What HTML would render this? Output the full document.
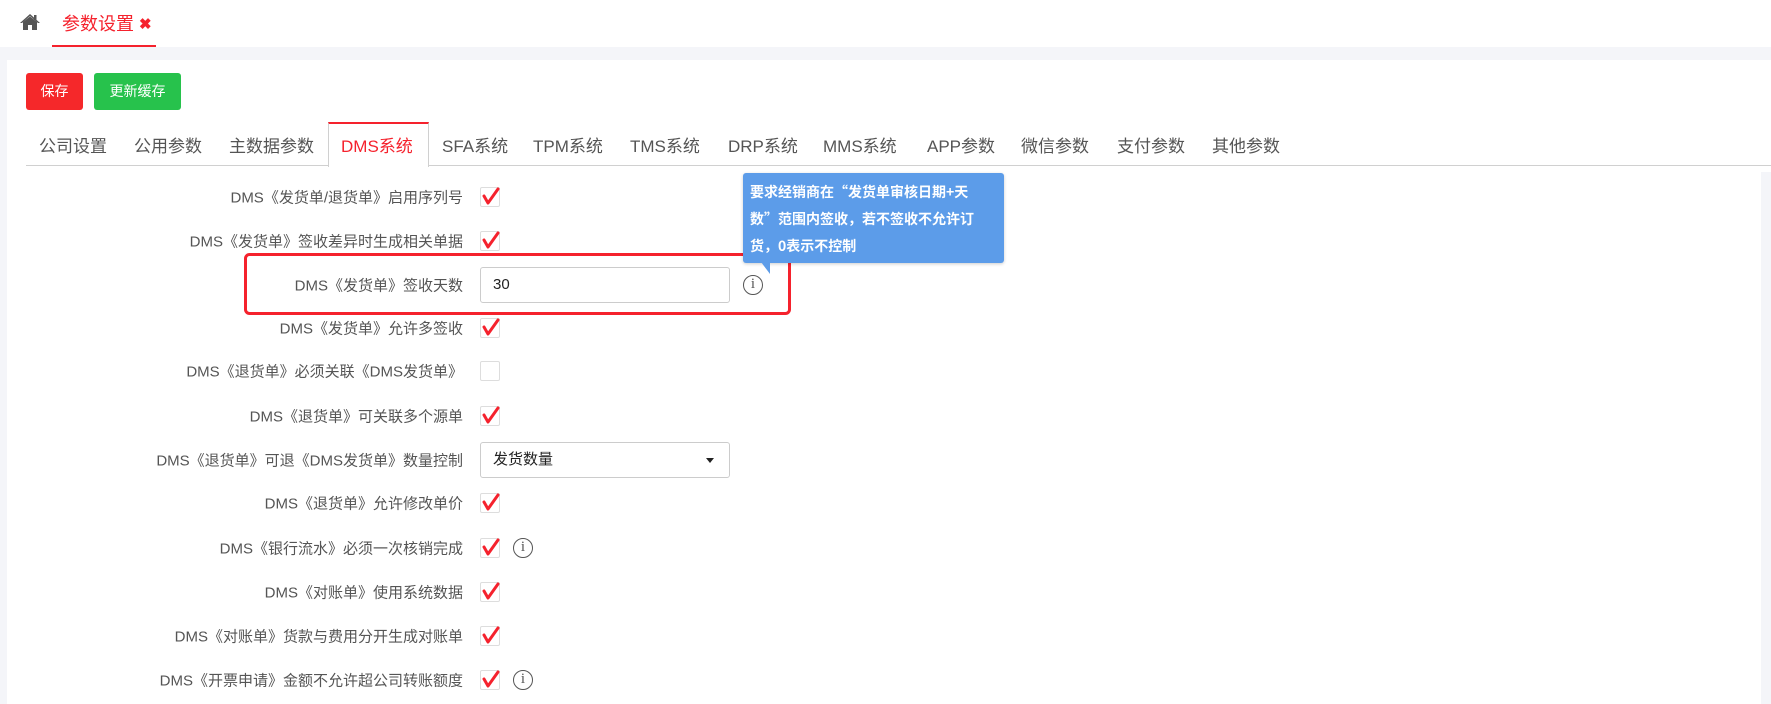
<!DOCTYPE html>
<html><head><meta charset="utf-8"><style>
*{margin:0;padding:0;box-sizing:border-box}
body{width:1771px;height:704px;overflow:hidden;background:#f4f5f9;font-family:"Liberation Sans","Noto Sans CJK SC",sans-serif;position:relative}
.top{position:absolute;left:0;top:0;width:1771px;height:47px;background:#fff}
.panel{position:absolute;left:7px;top:60px;width:1764px;height:644px;background:#fff}
.abs{position:absolute}
.btn{position:absolute;top:73px;height:37px;border-radius:3px;color:#fff;font-size:14px;line-height:37px;text-align:center}
.tab{position:absolute;top:132px;font-size:17px;color:#555;white-space:nowrap}
.lbl{position:absolute;right:1308px;font-size:15px;color:#555;white-space:nowrap;transform:translateY(-50%)}
.cb{position:absolute;left:480px;width:20px;height:20px;border:1px solid #ddd;border-radius:2px;background:#fff}
.info{position:absolute;width:20px;height:20px;border:1.5px solid #555;border-radius:50%;font-family:"Liberation Serif",serif;font-size:15px;color:#555;text-align:center;line-height:17px}
</style></head><body>
<div class="top"></div>
<svg class="abs" style="left:19px;top:13px" width="22" height="18" viewBox="0 0 22 18"><path d="M11 1 L1 10 L3 10 L11 3 L19 10 L21 10 Z" fill="#555"/><path d="M4 9 L11 3.5 L18 9 V17 H13 V12 H9 V17 H4 Z" fill="#555"/><rect x="15" y="2" width="2.5" height="5" fill="#555"/></svg>
<div class="abs" style="left:62px;top:10px;font-size:18px;color:#f5222d;white-space:nowrap">参数设置 <span style="font-size:15px;font-weight:bold;position:relative;top:-1px">✖</span></div>
<div class="abs" style="left:52px;top:45px;width:104px;height:2px;background:#f5222d"></div>
<div class="panel"></div>
<div class="btn" style="left:26px;width:57px;background:#f5282a">保存</div>
<div class="btn" style="left:94px;width:87px;background:#27c24c">更新缓存</div>
<div class="abs" style="left:26px;top:165px;width:1745px;height:1px;background:#d0d0d0"></div>
<div class="abs" style="left:328px;top:122px;width:101px;height:45px;background:#fff;border:1px solid #d0d0d0;border-top:2px solid #f5222d;border-bottom:none"></div>
<div class="tab" style="left:39px">公司设置</div>
<div class="tab" style="left:134px">公用参数</div>
<div class="tab" style="left:229px">主数据参数</div>
<div class="tab" style="left:341px;color:#f5222d">DMS系统</div>
<div class="tab" style="left:442px">SFA系统</div>
<div class="tab" style="left:533px">TPM系统</div>
<div class="tab" style="left:630px">TMS系统</div>
<div class="tab" style="left:728px">DRP系统</div>
<div class="tab" style="left:823px">MMS系统</div>
<div class="tab" style="left:927px">APP参数</div>
<div class="tab" style="left:1021px">微信参数</div>
<div class="tab" style="left:1117px">支付参数</div>
<div class="tab" style="left:1212px">其他参数</div>
<div class="abs" style="left:1761px;top:172px;width:10px;height:532px;background:#f4f5f9"></div>

<div class="lbl" style="top:197px">DMS《发货单/退货单》启用序列号</div>
<div class="lbl" style="top:241px">DMS《发货单》签收差异时生成相关单据</div>
<div class="lbl" style="top:285px">DMS《发货单》签收天数</div>
<div class="lbl" style="top:328px">DMS《发货单》允许多签收</div>
<div class="lbl" style="top:371px">DMS《退货单》必须关联《DMS发货单》</div>
<div class="lbl" style="top:416px">DMS《退货单》可关联多个源单</div>
<div class="lbl" style="top:460px">DMS《退货单》可退《DMS发货单》数量控制</div>
<div class="lbl" style="top:503px">DMS《退货单》允许修改单价</div>
<div class="lbl" style="top:548px">DMS《银行流水》必须一次核销完成</div>
<div class="lbl" style="top:592px">DMS《对账单》使用系统数据</div>
<div class="lbl" style="top:636px">DMS《对账单》货款与费用分开生成对账单</div>
<div class="lbl" style="top:680px">DMS《开票申请》金额不允许超公司转账额度</div>

<div class="abs" style="left:480px;top:267px;width:250px;height:36px;border:1px solid #ccc;border-radius:3px;font-size:15px;line-height:34px;padding-left:12px;color:#222">30</div>
<div class="abs" style="left:480px;top:442px;width:250px;height:36px;border:1px solid #ccc;border-radius:3px;font-size:15px;line-height:34px;padding-left:12px;color:#222">发货数量</div>
<div class="abs" style="left:706px;top:458px;width:0;height:0;border-left:4.5px solid transparent;border-right:4.5px solid transparent;border-top:5px solid #222"></div>

<div class="cb" style="top:187px"></div>
<div class="cb" style="top:231px"></div>
<div class="cb" style="top:318px"></div>
<div class="cb" style="top:361px"></div>
<div class="cb" style="top:406px"></div>
<div class="cb" style="top:493px"></div>
<div class="cb" style="top:538px"></div>
<div class="cb" style="top:582px"></div>
<div class="cb" style="top:626px"></div>
<div class="cb" style="top:670px"></div>
<svg class="abs" style="left:0;top:0" width="1771" height="704">
<g fill="none" stroke="#f5222d" stroke-width="3" stroke-linecap="round" stroke-linejoin="round">
<path d="M484 196 L488 203 L498 189"/>
<path d="M484 196 L488 203 L498 189" transform="translate(0,44)"/>
<path d="M484 196 L488 203 L498 189" transform="translate(0,131)"/>
<path d="M484 196 L488 203 L498 189" transform="translate(0,219)"/>
<path d="M484 196 L488 203 L498 189" transform="translate(0,306)"/>
<path d="M484 196 L488 203 L498 189" transform="translate(0,351)"/>
<path d="M484 196 L488 203 L498 189" transform="translate(0,395)"/>
<path d="M484 196 L488 203 L498 189" transform="translate(0,439)"/>
<path d="M484 196 L488 203 L498 189" transform="translate(0,483)"/>
</g>
<rect x="245.5" y="254.5" width="544" height="59" rx="4" fill="none" stroke="#f5222d" stroke-width="3"/>
</svg>
<div class="info" style="left:743px;top:275px">i</div>
<div class="info" style="left:513px;top:538px">i</div>
<div class="info" style="left:513px;top:670px">i</div>

<div class="abs" style="left:743px;top:173px;width:261px;height:90px;background:#5c9ce9;border-radius:3px;color:#fff;font-family:'Noto Sans CJK SC',sans-serif;font-size:14px;font-weight:bold;line-height:27px;padding:6px 6px 0 7px;box-shadow:0 1px 3px rgba(0,0,0,.2)">要求经销商在“发货单审核日期+天数”范围内签收，若不签收不允许订货，0表示不控制</div>
<svg class="abs" style="left:760px;top:262px" width="12" height="13"><path d="M1 0 L10 0 L10 12 Z" fill="#5c9ce9"/></svg>
</body></html>
